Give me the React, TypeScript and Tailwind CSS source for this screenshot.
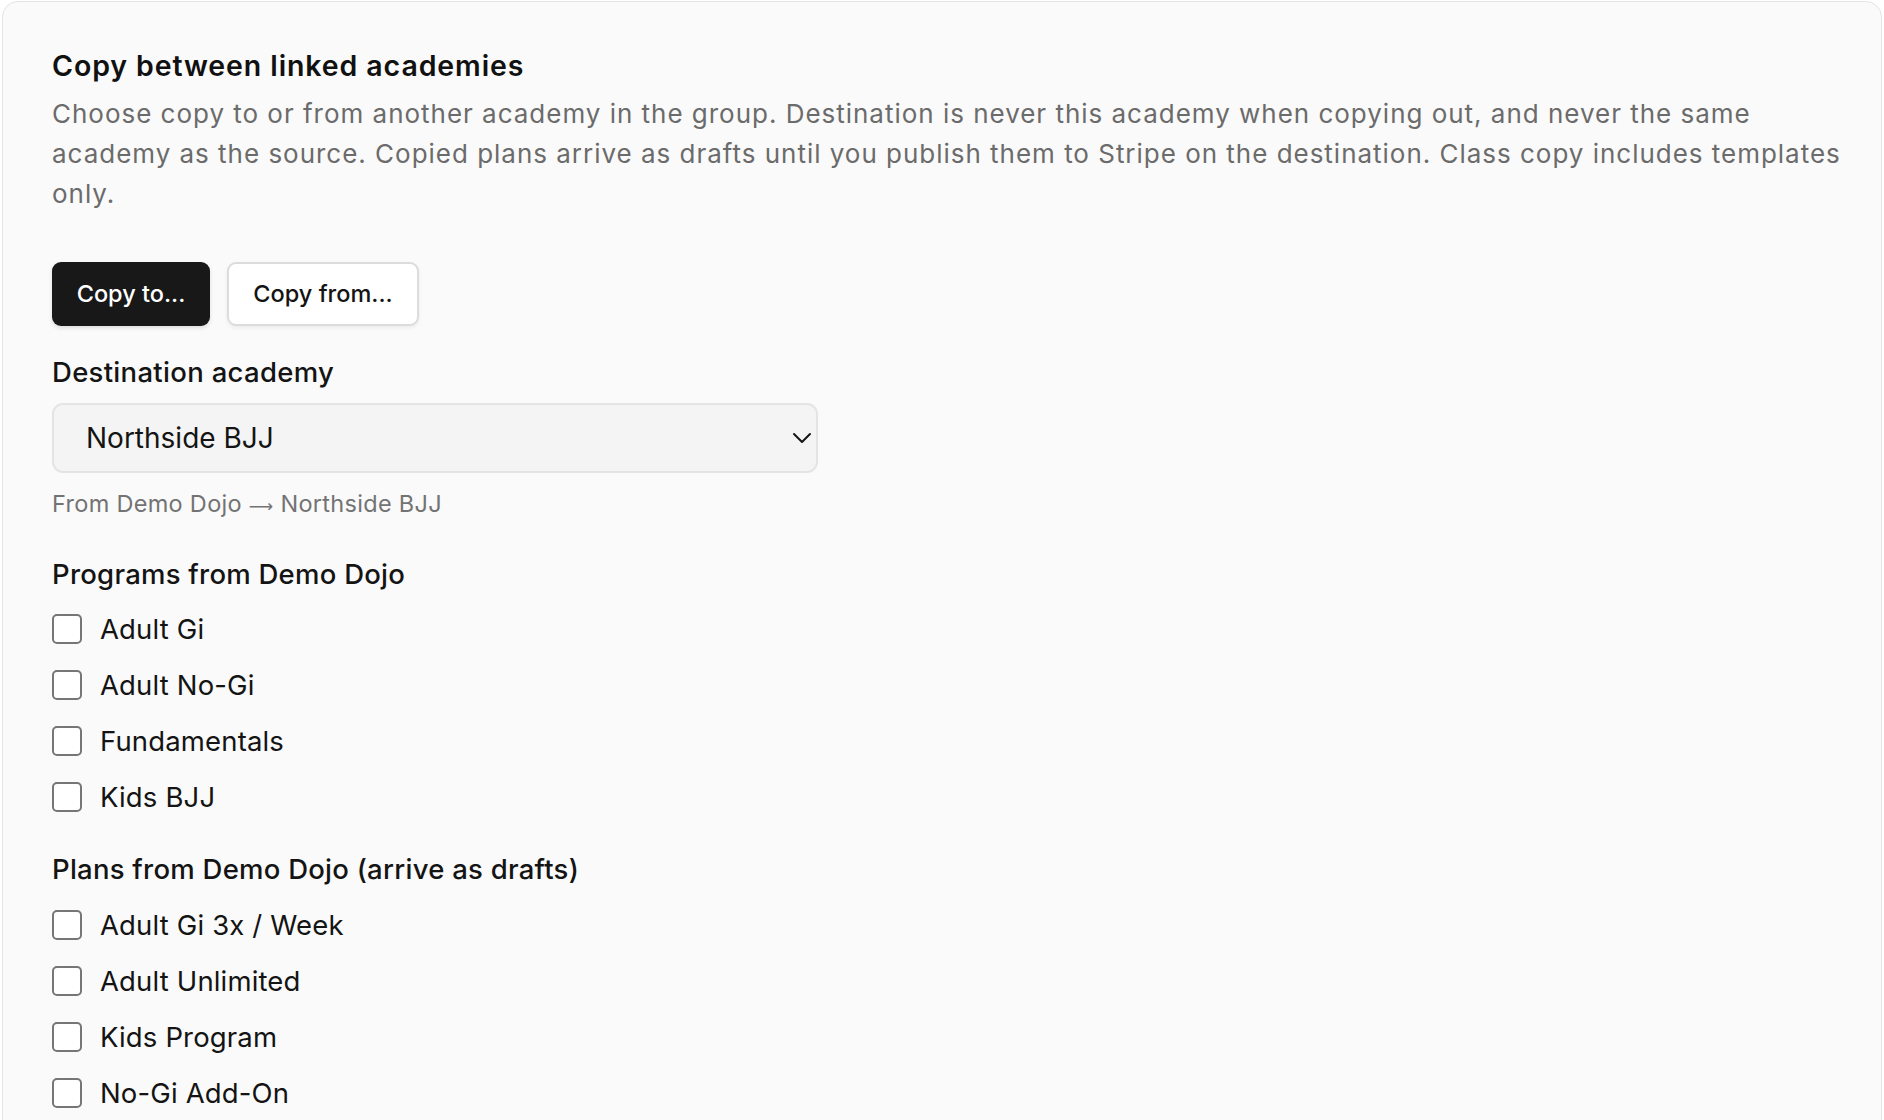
import React from "react";

const programs = ["Adult Gi", "Adult No-Gi", "Fundamentals", "Kids BJJ"];
const plans = ["Adult Gi 3x / Week", "Adult Unlimited", "Kids Program", "No-Gi Add-On"];

function CheckRow({ label }: { label: string }) {
  return (
    <label className="flex h-[40px] items-center gap-[18px]">
      <span className="box-border h-[30px] w-[30px] shrink-0 rounded-[5px] border-[2px] border-[#767676] bg-white" />
      <span className="text-[27.5px] leading-[40px] tracking-[0.15px] text-[#141414]">{label}</span>
    </label>
  );
}

export default function App() {
  return (
    <div
      className="min-h-[1120px] w-full bg-white px-[2px] pt-[1px]"
      style={{ fontFamily: "Inter, 'Noto Sans', sans-serif" }}
    >
      <div className="h-[1200px] rounded-[16px] border-[1.5px] border-[#e4e4e4] bg-[#fafafa] pl-[49px] pr-[34px] pt-[46px]">
        <h2 className="text-[28.5px] font-semibold leading-[36px] tracking-[0.9px] text-[#111111]">
          Copy between linked academies
        </h2>
        <p className="mt-[10px] text-[26px] leading-[40px] tracking-[0.98px] text-[#6b6b6b]">
          Choose copy to or from another academy in the group. Destination is never this academy when copying out, and
          never the same academy as the source. Copied plans arrive as drafts until you publish them to Stripe on the
          destination. Class copy includes templates only.
        </p>

        <div className="mt-[48px] flex gap-[17px]">
          <button className="h-[64px] w-[158px] rounded-[9px] bg-[#181818] text-[23.5px] font-medium text-white shadow-[0_2px_4px_rgba(0,0,0,0.12)]">
            Copy to...
          </button>
          <button className="box-border h-[64px] w-[192px] rounded-[9px] border-[2px] border-[#dcdcdc] bg-white text-[23.5px] font-medium text-[#141414] shadow-[0_2px_4px_rgba(0,0,0,0.06)]">
            Copy from...
          </button>
        </div>

        <div className="mt-[28px] text-[27.5px] font-medium leading-[36px] tracking-[0.3px] text-[#141414]">
          Destination academy
        </div>
        <div className="relative mt-[13px] box-border flex h-[70px] w-[766px] items-center rounded-[11px] border-[2px] border-[#e4e4e4] bg-[#f4f4f4] pl-[32px]">
          <span className="text-[28px] text-[#141414]">Northside BJJ</span>
          <svg
            className="absolute right-[2px] top-1/2 -translate-y-1/2"
            width="24"
            height="24"
            viewBox="0 0 24 24"
            fill="none"
            stroke="#141414"
            strokeWidth="2"
            strokeLinecap="round"
            strokeLinejoin="round"
          >
            <path d="M4 8l8 8 8-8" />
          </svg>
        </div>
        <div className="mt-[16px] h-[30px] overflow-visible text-[23.5px] leading-[30px] tracking-[0.3px] text-[#737373]">
          From Demo Dojo{" "}
          <span className="text-[17px] leading-[10px]" style={{ fontFamily: "'DejaVu Sans', sans-serif" }}>
            ⟶
          </span>{" "}
          Northside BJJ
        </div>

        <div className="mt-[37px] text-[27.5px] font-medium leading-[36px] tracking-[0.25px] text-[#141414]">
          Programs from Demo Dojo
        </div>
        <div className="mt-[17px] flex flex-col gap-[16px]">
          {programs.map((p) => (
            <CheckRow key={p} label={p} />
          ))}
        </div>

        <div className="mt-[34px] text-[27.5px] font-medium leading-[36px] tracking-[0.25px] text-[#141414]">
          Plans from Demo Dojo (arrive as drafts)
        </div>
        <div className="mt-[18px] flex flex-col gap-[16px]">
          {plans.map((p) => (
            <CheckRow key={p} label={p} />
          ))}
        </div>
      </div>
    </div>
  );
}
